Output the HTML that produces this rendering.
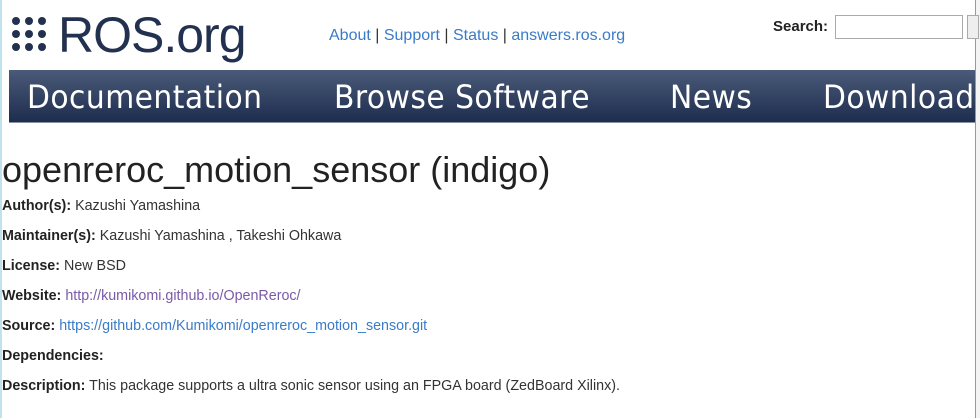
<!DOCTYPE html>
<html><head><meta charset="utf-8"><style>
body{margin:0;width:980px;height:418px;overflow:hidden;background:#fff;font-family:"Liberation Sans",sans-serif;position:relative}
.lb{position:absolute;left:0;top:0;width:2px;height:418px;background:#bfe3ec}
.rl{position:absolute;left:975px;top:0;width:1px;height:418px;background:#999}
.rs{position:absolute;left:976px;top:0;width:4px;height:418px;background:#f4f4f4}
.logo{position:absolute;left:10px;top:9px}
.logo .t{position:absolute;left:48px;top:-3px;font-size:50px;color:#22314f;letter-spacing:-1px;white-space:nowrap}
.dots{position:absolute;left:2px;top:8px;width:40px}
.dots i{position:absolute;width:8px;height:8px;border-radius:50%;background:#22314f}
.links{position:absolute;left:329px;top:27px;font-size:16px;color:#333}
.links a{color:#3a7bc8;text-decoration:none}
.search{position:absolute;left:773px;top:18px;font-size:15px;font-weight:bold;color:#222}
.inp{position:absolute;left:835px;top:15px;width:126px;height:22px;border:1px solid #aaa}
.btn{position:absolute;left:967px;top:15px;width:10px;height:22px;border:1px solid #aaa;background:#eee}
.nav{position:absolute;left:9px;top:70px;width:966px;height:52px;background:linear-gradient(#4a5a78,#1e2d4e);border-bottom:1px solid #8892a6}
.nav span{position:absolute;top:8px;font-size:32px;color:#fff;letter-spacing:0.5px;font-family:"DejaVu Sans","Liberation Sans",sans-serif;white-space:nowrap;transform:scaleX(0.93);transform-origin:left}
h1{position:absolute;left:2px;top:149px;margin:0;font-size:36px;font-weight:normal;color:#222;white-space:nowrap;line-height:42px}
.r{position:absolute;left:2px;font-size:14.3px;color:#333;white-space:nowrap;line-height:16px}
.r b{color:#222}
.r a{color:#3a7bc8;text-decoration:none}
</style></head><body>
<div class="lb"></div><div class="rl"></div><div class="rs"></div>
<div class="logo"><div class="dots">
<i style="left:0;top:0"></i><i style="left:13px;top:0"></i><i style="left:26px;top:0"></i>
<i style="left:0;top:13px"></i><i style="left:13px;top:13px"></i><i style="left:26px;top:13px"></i>
<i style="left:0;top:26px"></i><i style="left:13px;top:26px"></i><i style="left:26px;top:26px"></i>
</div><div class="t">ROS.org</div></div>
<div class="links"><a>About</a> | <a>Support</a> | <a>Status</a> | <a>answers.ros.org</a></div>
<div class="search">Search:</div><div class="inp"></div><div class="btn"></div>
<div class="nav"><span style="left:18px">Documentation</span><span style="left:325px">Browse Software</span><span style="left:661px">News</span><span style="left:814px">Download</span></div>
<h1>openreroc_motion_sensor (indigo)</h1>
<div class="r" style="top:198px"><b>Author(s):</b> Kazushi Yamashina</div>
<div class="r" style="top:228px"><b>Maintainer(s):</b> Kazushi Yamashina , Takeshi Ohkawa</div>
<div class="r" style="top:258px"><b>License:</b> New BSD</div>
<div class="r" style="top:288px"><b>Website:</b> <a style="color:#7a5aa8">http://kumikomi.github.io/OpenReroc/</a></div>
<div class="r" style="top:318px"><b>Source:</b> <a>https://github.com/Kumikomi/openreroc_motion_sensor.git</a></div>
<div class="r" style="top:348px"><b>Dependencies:</b></div>
<div class="r" style="top:378px"><b>Description:</b> This package supports a ultra sonic sensor using an FPGA board (ZedBoard Xilinx).</div>
</body></html>
